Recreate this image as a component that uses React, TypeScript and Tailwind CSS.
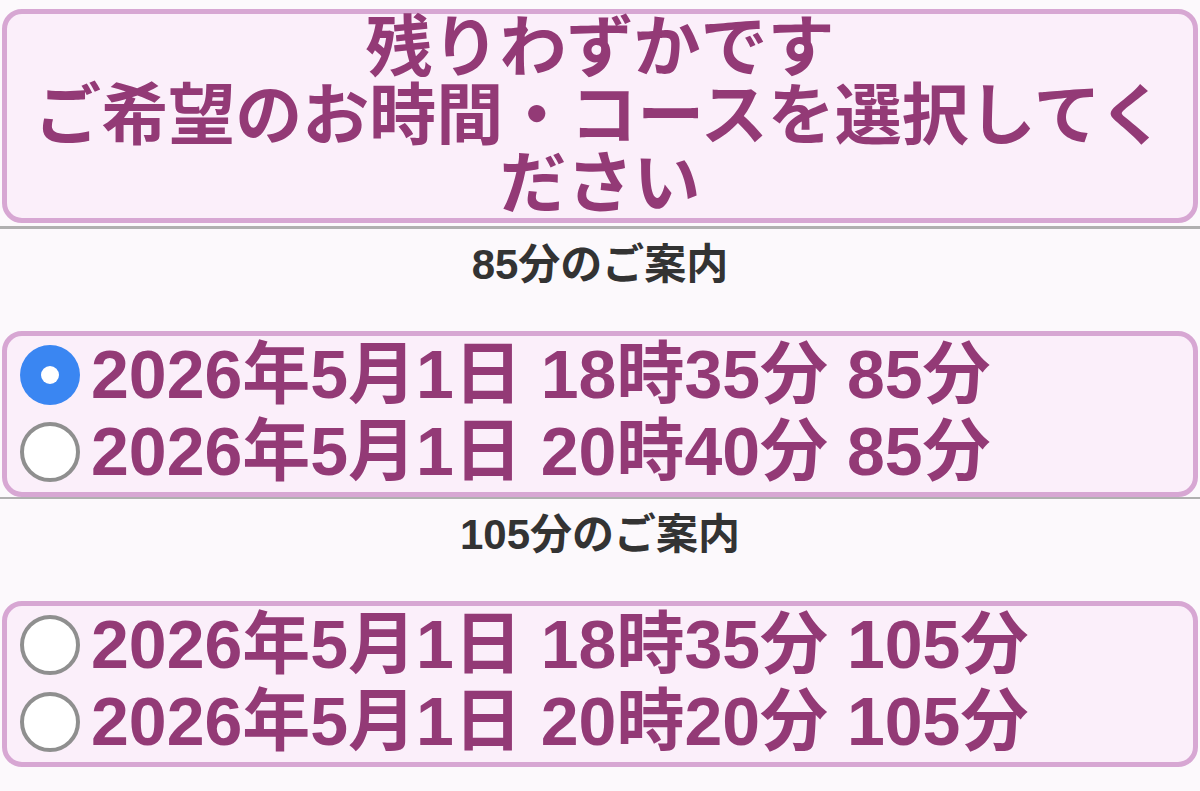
import React from "react";

const FONT = '"Liberation Sans", "Noto Sans CJK JP", sans-serif';

function Radio({ checked }: { checked?: boolean }) {
  if (checked) {
    return (
      <span className="flex h-[60px] w-[60px] shrink-0 items-center justify-center rounded-full bg-[#3a86f2]">
        <span className="h-[18px] w-[18px] rounded-full bg-white" />
      </span>
    );
  }
  return (
    <span className="h-[60px] w-[60px] shrink-0 rounded-full border-[4px] border-[#8f8f8f] bg-white" />
  );
}

function Row({ text, checked }: { text: string; checked?: boolean }) {
  return (
    <label className="flex h-[77px] items-center pl-[13px]">
      <Radio checked={checked} />
      <span className="ml-[11px] whitespace-nowrap text-[68px] font-bold leading-[77px] text-[#933a76]">
        {text}
      </span>
    </label>
  );
}

function Section({
  title,
  rows,
  divider,
}: {
  title: string;
  rows: { text: string; checked?: boolean }[];
  divider?: boolean;
}) {
  return (
    <div>
      <div className="h-[102px] text-center text-[42px] font-bold leading-[72px] text-[#333333]">
        {title}
      </div>
      <div className={divider ? "border-b-[2px] border-[#b0b0b0]" : ""}>
        <div className="mx-[2px] rounded-[20px] border-[5px] border-[#d7a7d3] bg-[#fbeffa] pb-[2px]">
          {rows.map((r, i) => (
            <Row key={i} text={r.text} checked={r.checked} />
          ))}
        </div>
      </div>
    </div>
  );
}

export default function App() {
  return (
    <div
      className="min-h-[791px] w-[1200px] overflow-hidden bg-[#fcf9fc]"
      style={{ fontFamily: FONT }}
    >
      <div className="border-b-[3px] border-[#b0b0b0] pt-[9px] pb-[3px]">
        <div className="mx-[2px] rounded-[20px] border-[5px] border-[#d7a7d3] bg-[#fbeffa] text-center text-[67px] font-bold leading-[68px] text-[#933a76]">
          残りわずかです
          <br />
          ご希望のお時間・コースを選択してください
        </div>
      </div>
      <Section
        title="85分のご案内"
        divider
        rows={[
          { text: "2026年5月1日 18時35分 85分", checked: true },
          { text: "2026年5月1日 20時40分 85分" },
        ]}
      />
      <Section
        title="105分のご案内"
        rows={[
          { text: "2026年5月1日 18時35分 105分" },
          { text: "2026年5月1日 20時20分 105分" },
        ]}
      />
    </div>
  );
}
